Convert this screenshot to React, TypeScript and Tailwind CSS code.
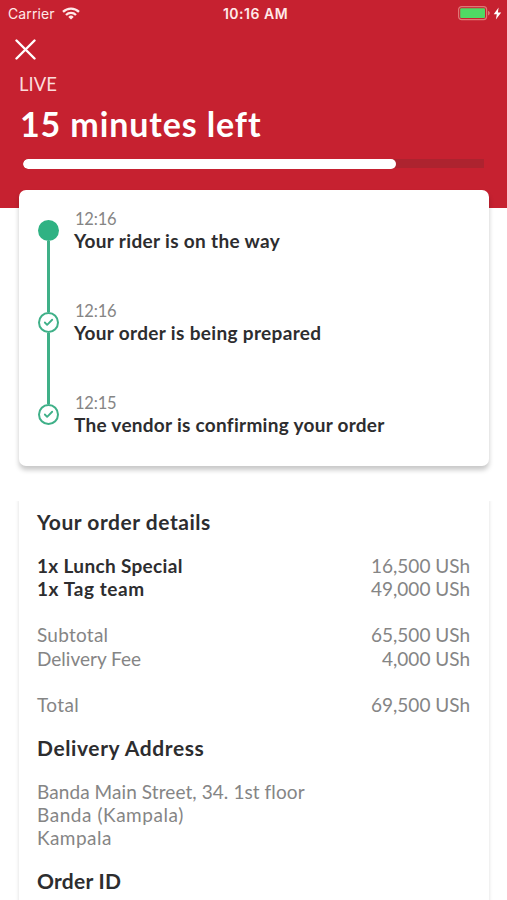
import { Check } from "lucide-react";

const steps = [
  { time: "12:16", label: "Your rider is on the way", tracking: "tracking-[0.34px]", done: false },
  { time: "12:16", label: "Your order is being prepared", tracking: "tracking-[0.34px]", done: true },
  { time: "12:15", label: "The vendor is confirming your order", tracking: "tracking-[0.28px]", done: true },
];

const items = [
  { name: "1x Lunch Special", price: "16,500 USh", tracking: "tracking-[0.33px]" },
  { name: "1x Tag team", price: "49,000 USh", tracking: "tracking-[0.6px]" },
];

const fees = [
  { name: "Subtotal", price: "65,500 USh", tracking: "tracking-[0.25px]" },
  { name: "Delivery Fee", price: "4,000 USh", tracking: "tracking-normal" },
];

const address = [
  { line: "Banda Main Street, 34. 1st floor", tracking: "tracking-[0.08px]" },
  { line: "Banda (Kampala)", tracking: "tracking-[0.55px]" },
  { line: "Kampala", tracking: "tracking-[0.45px]" },
];

function StatusBar() {
  return (
    <div className="grid h-[27px] grid-cols-3 items-center pl-2 pr-1 font-['Inter',sans-serif] text-[14px] leading-none text-[#ffe9e9]">
      <div className="flex items-center gap-[7px]">
        <span className="tracking-[0.1px]">Carrier</span>
        <svg width="18" height="13" viewBox="0 0 18 13" fill="none" stroke="currentColor" strokeWidth="2.3">
          <path d="M1 4.9a11.4 11.4 0 0 1 16 0" />
          <path d="M4 8a7.1 7.1 0 0 1 10 0" />
          <path d="M9 12.6 6.3 9.9a3.9 3.9 0 0 1 5.4 0Z" fill="currentColor" stroke="none" />
        </svg>
      </div>
      <span className="text-center font-semibold tracking-[0.5px] whitespace-nowrap">10:16 AM</span>
      <div className="flex items-center justify-end">
        <svg width="33" height="15" viewBox="0 0 33 15">
          <rect x="0.6" y="0.6" width="28" height="13" rx="3" fill="none" stroke="#df7776" strokeWidth="1.2" />
          <rect x="2.2" y="2.2" width="24.8" height="9.8" rx="1" fill="#4fd964" />
          <path d="M30 4.8c2.4.8 2.4 3.8 0 4.6Z" fill="#df7776" />
        </svg>
        <svg width="9" height="13" viewBox="0 0 9 13" fill="#fff" className="ml-[2px] mr-px">
          <path d="M5.6.6.7 7.3h3.1L2.9 12.4 8.2 5.5H4.9Z" />
        </svg>
      </div>
    </div>
  );
}

function StepMarker({ done }: { done: boolean }) {
  if (!done) return <div className="size-[21px] shrink-0 rounded-full bg-[#2fb283]" />;

  return (
    <div className="flex size-[21px] shrink-0 items-center justify-center rounded-full border-2 border-[#3fb088] text-[#3fb088]">
      <Check size={11} strokeWidth={4} />
    </div>
  );
}

type PriceRowProps = { name: string; price: string; tracking: string; bold?: boolean };

function PriceRow({ name, price, tracking, bold }: PriceRowProps) {
  return (
    <div className="flex justify-between">
      <span className={`${tracking} ${bold ? "font-bold text-[#2d2d2f]" : ""}`}>{name}</span>
      <span>{price}</span>
    </div>
  );
}

export default function App() {
  return (
    <div className="h-[900px] w-[507px] overflow-hidden bg-white font-['Lato',sans-serif] text-[#858585]">
      <header className="h-[208px] bg-[#c62130] text-white">
        <StatusBar />
        <button className="ml-[15px] mt-[12px] block">
          <svg width="21" height="21" viewBox="0 0 21 21" stroke="#fff" strokeWidth="2.4" strokeLinecap="round">
            <path d="M1.5 1.5l18 18M19.5 1.5l-18 18" />
          </svg>
        </button>
        <div className="mt-[12px] pl-[19px] text-[18.5px] leading-6 text-[#fbdcdc]">LIVE</div>
        <h1 className="mt-[8px] pl-5 text-[34px] font-bold leading-10 tracking-[0.88px]">15 minutes left</h1>
        <div className="ml-[23px] mt-[15px] h-[10px] w-[461px] bg-[linear-gradient(#ad232f,#ad232f)] bg-[length:100%_9px] bg-no-repeat [clip-path:inset(0_0_0_0_round_5px_0_0_5px)]">
          <div className="h-full w-[81%] rounded-full bg-white" />
        </div>
      </header>

      <section className="relative ml-[19px] -mt-[18px] h-[276px] w-[470px] rounded-[7px] bg-white pl-[19px] pt-[30px] shadow-[0_4px_5px_rgba(0,0,0,0.22)]">
        {steps.map((step, i) => (
          <div key={step.label} className="flex gap-[15px]">
            <div className="flex flex-col items-center">
              <StepMarker done={step.done} />
              {i < steps.length - 1 && <div className="h-[71px] w-[3px] bg-[#3fb088]" />}
            </div>
            <div className="-mt-[12px]">
              <div className="pl-px text-[16.5px] leading-[22px] tracking-[-0.2px]">{step.time}</div>
              <div className={`text-[19px] font-bold leading-[21px] text-[#2d2d2f] ${step.tracking}`}>{step.label}</div>
            </div>
          </div>
        ))}
      </section>

      <section className="ml-[19px] mt-[35px] h-[410px] w-[470px] pl-[18px] pr-[19px] pt-[7px] text-[19px] leading-[23.2px] shadow-[0_0_3px_1px_rgba(0,0,0,0.09)] [clip-path:inset(0_-6px)]">
        <h2 className="text-[21px] font-bold leading-[28px] tracking-[0.54px] text-[#2d2d2f]">Your order details</h2>
        <div className="mt-[18px]">
          {items.map((item) => (
            <PriceRow key={item.name} {...item} bold />
          ))}
        </div>
        <div className="mt-[23px]">
          {fees.map((fee) => (
            <PriceRow key={fee.name} {...fee} />
          ))}
        </div>
        <div className="mt-[23px]">
          <PriceRow name="Total" price="69,500 USh" tracking="tracking-[0.4px]" />
        </div>

        <h2 className="mt-[18px] text-[21px] font-bold leading-[28px] tracking-[0.6px] text-[#2d2d2f]">Delivery Address</h2>
        <div className="mt-[18px]">
          {address.map(({ line, tracking }) => (
            <div key={line} className={tracking}>{line}</div>
          ))}
        </div>

        <h2 className="mt-[17px] text-[21px] font-bold leading-[28px] tracking-[0.25px] text-[#2d2d2f]">Order ID</h2>
      </section>
    </div>
  );
}
